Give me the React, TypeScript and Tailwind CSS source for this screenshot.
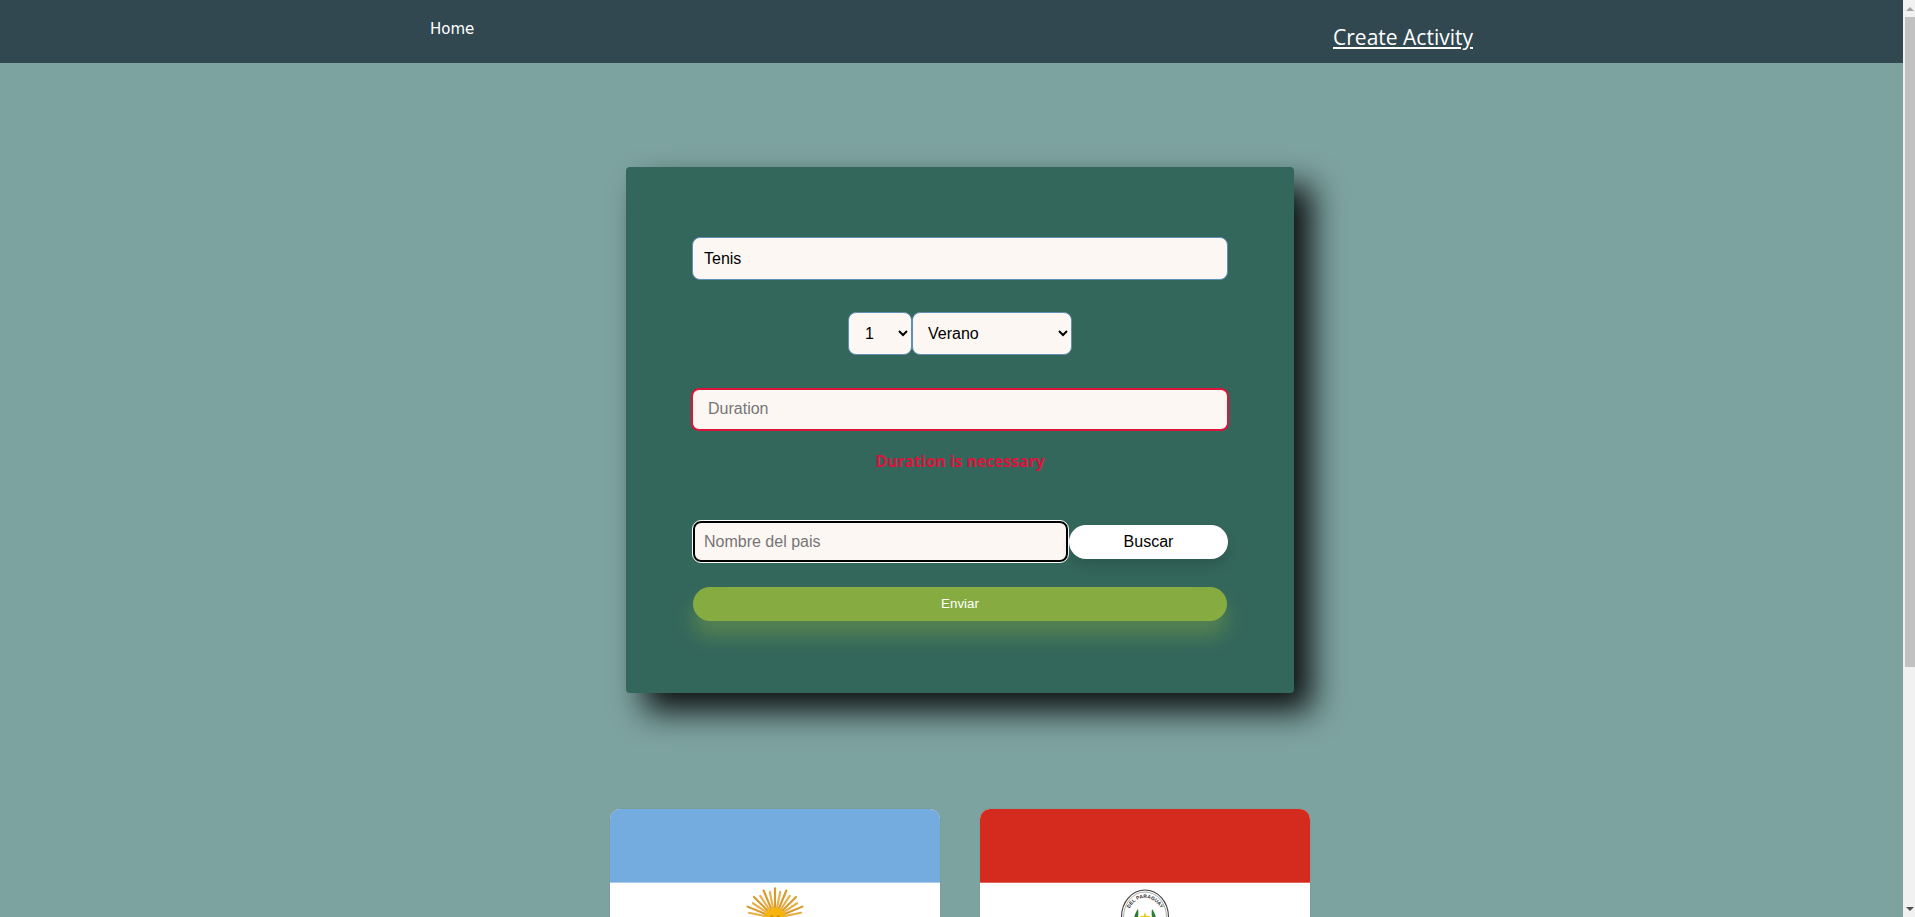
import { ChangeEvent, FormEvent, useState } from 'react';

type Flag = {
  name: string;
  color: string;
  emblem: 'sun' | 'seal';
};

const FLAGS: Flag[] = [
  { name: 'Argentina', color: 'bg-[#74acdf] border-[#a9cbec]', emblem: 'sun' },
  { name: 'Paraguay', color: 'bg-[#d52b1e] border-[#e5655c]', emblem: 'seal' },
];

const RAYS = Array.from({ length: 32 }, (_, i) => (i * 360) / 32);

function Sun() {
  return (
    <svg width="68" height="68" viewBox="-32 -32 64 64">
      {RAYS.map((deg, i) => (
        <line
          key={deg}
          x1="0"
          y1="-9"
          x2="0"
          y2={i % 2 ? -25 : -28}
          stroke={i % 2 ? '#e8b04a' : '#d89a2c'}
          strokeWidth="2"
          strokeLinecap="round"
          transform={`rotate(${deg})`}
        />
      ))}
      <circle r="10" fill="#f6b40e" />
      <circle cx="-3" cy="-1" r="1.5" fill="#c98a10" />
      <circle cx="3" cy="-1" r="1.5" fill="#c98a10" />
    </svg>
  );
}

function Seal() {
  return (
    <svg width="52" height="60" viewBox="0 0 52 60">
      <ellipse cx="26" cy="30" rx="23.5" ry="27" fill="#fff" stroke="#444" strokeWidth="1.2" />
      <ellipse cx="26" cy="30" rx="21.5" ry="25" fill="none" stroke="#999" strokeWidth="0.8" />
      <path id="seal-arc" d="M8 32 A18 21 0 0 1 44 32" fill="none" />
      <text fontSize="5" fontWeight="700" fill="#333" fontFamily="'Liberation Sans', sans-serif">
        <textPath href="#seal-arc" startOffset="50%" textAnchor="middle">
          DEL PARAGUAY
        </textPath>
      </text>
      <path d="M15 38 C14 31 16 26 19 22 C20 28 19 33 15 38Z" fill="#2e7d32" />
      <path d="M37 38 C38 31 36 26 33 22 C32 28 33 33 37 38Z" fill="#2e7d32" />
      <path d="M26 25 L27.4 29 L31.5 29 L28.2 31.5 L29.4 35.5 L26 33 L22.6 35.5 L23.8 31.5 L20.5 29 L24.6 29Z" fill="#f2c81e" />
    </svg>
  );
}

function FlagCard({ flag }: { flag: Flag }) {
  return (
    <article className="w-[330px] h-[400px] rounded-[10px] overflow-hidden bg-white shrink-0 shadow-[0_0_1px_#5f7f7d]">
      <div className={`h-[74px] border-b ${flag.color}`} />
      <div className={flag.emblem === 'sun' ? 'flex justify-center pt-[1px]' : 'flex justify-center pt-[4px]'}>
        {flag.emblem === 'sun' ? <Sun /> : <Seal />}
      </div>
    </article>
  );
}

export default function App() {
  const [name, setName] = useState('Tenis');
  const [duration, setDuration] = useState('');
  const [country, setCountry] = useState('');

  const handleSubmit = (e: FormEvent) => {
    e.preventDefault();
  };

  return (
    <div className="flex h-screen overflow-hidden bg-[#7da3a1] font-['Liberation_Sans',sans-serif]">
      <div className="flex-1 min-w-0">
        <nav className="h-[63px] bg-[#324851] flex justify-between pl-[430px] pr-[430px]">
          <a href="#" className="mt-[19px] text-[15px] leading-5 text-white font-['DejaVu_Sans',sans-serif]">
            Home
          </a>
          <a href="#" className="mt-[24px] text-[21px] leading-[27px] h-[27px] text-white underline font-['Open_Sans',sans-serif]">
            Create Activity
          </a>
        </nav>

        <main className="flex flex-col items-center pl-[17px] pt-[104px]">
          <form
            onSubmit={handleSubmit}
            className="w-[668px] h-[526px] rounded-[4px] bg-[#34675c] shadow-[18px_18px_32px_#000000e6] px-[66px] pt-[70px] flex flex-col"
          >
            <input
              value={name}
              onChange={(e: ChangeEvent<HTMLInputElement>) => setName(e.target.value)}
              className="h-[43px] w-full rounded-lg border border-[#5f8fb4] bg-[#fdf7f4] px-[11px] text-[16px] text-black"
            />
            <div className="mt-[32px] flex justify-center h-[43px]">
              <select className="w-[64px] rounded-lg border border-[#5f8fb4] bg-[#fdf7f4] pl-[12px] text-[16px] text-black appearance-auto">
                <option>1</option>
                <option>2</option>
                <option>3</option>
                <option>4</option>
                <option>5</option>
              </select>
              <select className="w-[160px] rounded-lg border border-[#5f8fb4] bg-[#fdf7f4] pl-[11px] text-[16px] text-black appearance-auto">
                <option>Verano</option>
                <option>Otoño</option>
                <option>Invierno</option>
                <option>Primavera</option>
              </select>
            </div>
            <input
              value={duration}
              onChange={(e: ChangeEvent<HTMLInputElement>) => setDuration(e.target.value)}
              placeholder="Duration"
              className="mt-[33px] -mx-px h-[43px] rounded-lg border-2 border-[#dc143c] bg-[#fdf7f4] px-[15px] pb-[2px] text-[16px] text-black placeholder:text-[#757575]"
            />
            <p className="mt-[20px] h-[20px] text-center text-[15.7px] leading-5 font-bold text-[#dc143c] font-['Open_Sans',sans-serif]">
              Duration is necessary
            </p>
            <div className="mt-[49px] flex items-center">
              <input
                value={country}
                onChange={(e: ChangeEvent<HTMLInputElement>) => setCountry(e.target.value)}
                placeholder="Nombre del pais"
                className="m-px h-[41px] w-[375px] rounded-lg border-2 border-black outline-1 outline-white bg-[#fdf7f4] px-[9px] text-[16px] text-black placeholder:text-[#757575]"
              />
              <button
                type="button"
                className="h-[34px] flex-1 rounded-[17px] bg-white text-[16px] text-black shadow-[0_8px_12px_#00000020]"
              >
                Buscar
              </button>
            </div>
            <button
              type="submit"
              className="mt-[24px] mx-px h-[34px] rounded-[17px] bg-[#86ac41] text-[13.33px] text-white shadow-[0_15px_20px_#86ac4166]"
            >
              Enviar
            </button>
          </form>

          <section className="mt-[116px] flex gap-[40px]">
            {FLAGS.map((flag) => (
              <FlagCard key={flag.name} flag={flag} />
            ))}
          </section>
        </main>
      </div>

      <aside className="w-[12px] shrink-0 bg-[#f1f1f1] flex flex-col items-end">
        <div className="w-[10px] h-[17px] flex items-center justify-center">
          <div className="w-0 h-0 border-x-[4px] border-x-transparent border-b-[4px] border-b-[#a3a3a3]" />
        </div>
        <div className="w-[10px] h-[650px] bg-[#c1c1c1]" />
        <div className="flex-1" />
        <div className="w-[10px] h-[17px] flex items-center justify-center">
          <div className="w-0 h-0 border-x-[4px] border-x-transparent border-t-[4px] border-t-[#505050]" />
        </div>
      </aside>
    </div>
  );
}
